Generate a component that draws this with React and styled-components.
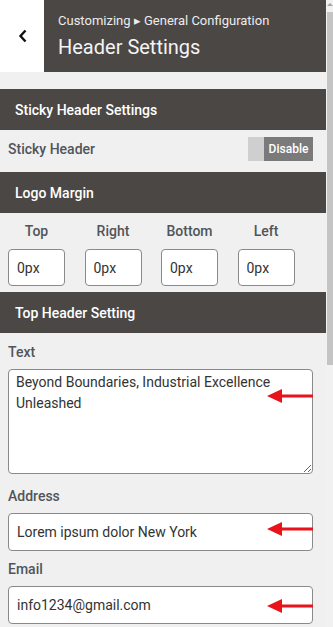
import React from "react";
import styled, { createGlobalStyle } from "styled-components";

const GlobalStyle = createGlobalStyle`
  html, body {
    margin: 0;
    padding: 0;
    background: #f0f0f0;
    font-family: Roboto, "Liberation Sans", sans-serif;
  }
  * { box-sizing: border-box; }
`;

const DARK = "#4b4745";

function Arrow() {
  return (
    <svg width="46" height="14" viewBox="0 0 46 14">
      <polygon points="0,7 15,0 15,14" fill="#e8131b" />
      <rect x="14" y="5.5" width="32" height="3" fill="#e8131b" />
    </svg>
  );
}

function App() {
  const margins = ["Top", "Right", "Bottom", "Left"];
  return (
    <Page>
      <GlobalStyle />
      <Main>
        <Header>
          <BackBox>
            <svg width="10" height="14" viewBox="0 0 10 14">
              <polyline
                points="7.5,1.5 2.5,7 7.5,12.5"
                fill="none"
                stroke="#111"
                strokeWidth="2.4"
              />
            </svg>
          </BackBox>
          <TitlePanel>
            <Crumb>Customizing ▸ General Configuration</Crumb>
            <Title>Header Settings</Title>
          </TitlePanel>
        </Header>

        <Section>Sticky Header Settings</Section>
        <ToggleRow>
          <RowLabel>Sticky Header</RowLabel>
          <Toggle>
            <Knob />
            <ToggleText>Disable</ToggleText>
          </Toggle>
        </ToggleRow>

        <Section>Logo Margin</Section>
        <MarginGrid>
          {margins.map((m) => (
            <MarginCell key={m}>
              <MarginLabel>{m}</MarginLabel>
              <SmallInput defaultValue="0px" />
            </MarginCell>
          ))}
        </MarginGrid>

        <Section>Top Header Setting</Section>
        <Form>
          <Field>
            <Label>Text</Label>
            <Holder>
              <TextArea defaultValue="Beyond Boundaries, Industrial Excellence Unleashed" />
              <ArrowWrap $top={20}>
                <Arrow />
              </ArrowWrap>
            </Holder>
          </Field>
          <Field $gap={13}>
            <Label>Address</Label>
            <Holder>
              <Input defaultValue="Lorem ipsum dolor New York" />
              <ArrowWrap $top={9}>
                <Arrow />
              </ArrowWrap>
            </Holder>
          </Field>
          <Field $gap={9}>
            <Label>Email</Label>
            <Holder>
              <Input defaultValue="info1234@gmail.com" />
              <ArrowWrap $top={13}>
                <Arrow />
              </ArrowWrap>
            </Holder>
          </Field>
        </Form>
      </Main>
      <ScrollTrack>
        <ScrollArrow />
        <Thumb />
      </ScrollTrack>
    </Page>
  );
}

const Page = styled.div`
  display: flex;
  width: 333px;
  height: 627px;
  overflow: hidden;
  background: #f0f0f0;
`;

const Main = styled.div`
  width: 326px;
  flex-shrink: 0;
  display: flex;
  flex-direction: column;
`;

const Header = styled.div`
  display: flex;
  height: 72px;
  margin-bottom: 17px;
`;

const BackBox = styled.div`
  width: 44px;
  background: #fff;
  display: flex;
  align-items: center;
  justify-content: center;
  padding-left: 2px;
`;

const TitlePanel = styled.div`
  flex: 1;
  background: ${DARK};
  padding: 13px 0 0 14px;
  display: flex;
  flex-direction: column;
`;

const Crumb = styled.div`
  color: #ececec;
  font-size: 13px;
  line-height: 16px;
`;

const Title = styled.div`
  color: #f4f4f4;
  font-size: 20px;
  line-height: 24px;
  margin-top: 6px;
`;

const Section = styled.div`
  height: 41px;
  background: ${DARK};
  color: #fff;
  font-size: 14px;
  font-weight: 500;
  display: flex;
  align-items: center;
  padding-left: 15px;
  flex-shrink: 0;
`;

const ToggleRow = styled.div`
  height: 42px;
  display: flex;
  align-items: center;
  justify-content: space-between;
  padding: 0 13px 5px 8px;
`;

const RowLabel = styled.span`
  font-size: 14px;
  font-weight: 500;
  color: #50555a;
`;

const Toggle = styled.div`
  display: flex;
  height: 24px;
  width: 65px;
`;

const Knob = styled.div`
  width: 16px;
  background: #cfcfcf;
`;

const ToggleText = styled.div`
  flex: 1;
  background: #7a7a7a;
  color: #fff;
  font-size: 12px;
  font-weight: 500;
  display: flex;
  align-items: center;
  justify-content: center;
`;

const MarginGrid = styled.div`
  display: grid;
  grid-template-columns: repeat(4, 57px);
  column-gap: 19.5px;
  padding: 9px 8px 6px;
`;

const MarginCell = styled.div`
  display: flex;
  flex-direction: column;
  align-items: center;
`;

const MarginLabel = styled.div`
  font-size: 14px;
  font-weight: 500;
  color: #50555a;
  line-height: 18px;
  margin-bottom: 9px;
`;

const SmallInput = styled.input`
  width: 57px;
  height: 37px;
  border: 1px solid #8a8a8a;
  border-radius: 4px;
  background: #fff;
  padding: 0 8px;
  font-family: Roboto, "Liberation Sans", sans-serif;
  font-size: 14px;
  color: #333;
  outline: none;
`;

const Form = styled.div`
  padding: 10px 13px 0 8px;
  display: flex;
  flex-direction: column;
`;

const Field = styled.div`
  display: flex;
  flex-direction: column;
  margin-top: ${(p) => p.$gap || 0}px;
`;

const Label = styled.div`
  font-size: 14px;
  font-weight: 500;
  color: #50555a;
  line-height: 18px;
  margin-bottom: 8px;
`;

const Holder = styled.div`
  position: relative;
`;

const baseField = `
  width: 100%;
  display: block;
  border: 1px solid #8a8a8a;
  border-radius: 4px;
  background: #fff;
  font-family: Roboto, "Liberation Sans", sans-serif;
  font-size: 14px;
  color: #333;
  outline: none;
  margin: 0;
`;

const TextArea = styled.textarea`
  ${baseField}
  height: 105px;
  padding: 2px 7px;
  line-height: 21px;
  resize: vertical;
`;

const Input = styled.input`
  ${baseField}
  height: 38px;
  padding: 0 8px;
`;

const ArrowWrap = styled.div`
  position: absolute;
  right: 0;
  top: ${(p) => p.$top}px;
  display: flex;
  pointer-events: none;
`;

const ScrollTrack = styled.div`
  width: 7px;
  background: #f1f1f1;
  display: flex;
  flex-direction: column;
  align-items: center;
`;

const ScrollArrow = styled.div`
  width: 0;
  height: 0;
  margin-top: 3px;
  border-left: 3px solid transparent;
  border-right: 3px solid transparent;
  border-bottom: 3px solid #a3a3a3;
`;

const Thumb = styled.div`
  width: 6px;
  height: 353px;
  margin-top: 6px;
  background: #c4c4c4;
`;

export default App;
